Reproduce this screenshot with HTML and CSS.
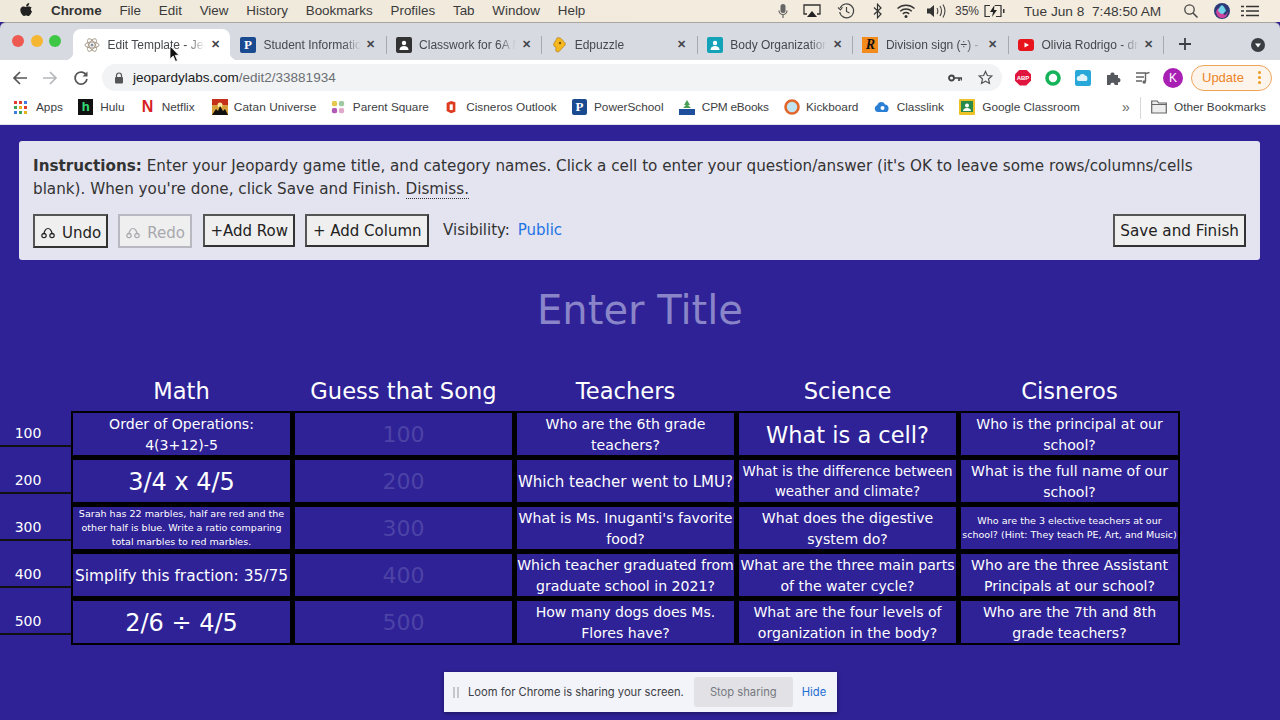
FILE: index.html
```html
<!DOCTYPE html>
<html lang="en">
<head>
<meta charset="utf-8">
<title>Edit Template - Jeopardy Labs</title>
<link rel="stylesheet" href="styles.css">
</head>
<body>
<header class="menubar">
  <svg class="apple" viewBox="0 0 14 16" width="14" height="16"><path fill="#222" d="M10.2 1c.1 1-.3 1.800-.8 2.400-.6.700-1.400 1.100-2.200 1-.1-.9.300-1.800.8-2.300C8.600 1.400 9.500 1 10.200 1zM12.800 5.600c-1.500.9-1.300 3 .2 3.800-.4 1.100-.9 2.100-1.600 3-.6.800-1.200 1.500-2.100 1.500-.9 0-1.200-.5-2.200-.5s-1.400.5-2.200.5c-.9 0-1.500-.8-2.100-1.600C1.500 10.500.8 7.900 1.800 6 2.400 5 3.400 4.400 4.500 4.400c.9 0 1.700.6 2.300.6.500 0 1.500-.7 2.600-.6 1.100.1 2.500.3 3.400 1.200z"/></svg>
  <nav class="menus">
    <span class="menu-strong">Chrome</span><span>File</span><span>Edit</span><span>View</span><span>History</span><span>Bookmarks</span><span>Profiles</span><span>Tab</span><span>Window</span><span>Help</span>
  </nav>
  <div class="status">
    <svg class="st st-mic" viewBox="0 0 12 16" width="12" height="16"><rect x="3.500" y="1" width="5" height="9" rx="2.500" fill="#666"/><path d="M2 7.500a4 4 0 0 0 8 0M6 12v3" stroke="#666" fill="none" stroke-width="1.200"/></svg>
    <svg class="st st-air" viewBox="0 0 18 16" width="18" height="16"><path d="M4 11H1V2h16v9h-3" fill="none" stroke="#333" stroke-width="1.300"/><path d="M9 8l5 6H4z" fill="#222"/></svg>
    <svg class="st st-clock" viewBox="0 0 18 18" width="18" height="18"><path d="M3.200 6a7 7 0 1 1-.5 4" fill="none" stroke="#444" stroke-width="1.200"/><path d="M1 5.500l2.500 2.500 2-2.800" fill="none" stroke="#444" stroke-width="1.100"/><path d="M9.500 5v4.500l3 1.500" fill="none" stroke="#444" stroke-width="1.200"/></svg>
    <svg class="st st-bt" viewBox="0 0 10 16" width="10" height="16"><path d="M1 4.500l7 6.500-3.500 3.800V1.200L8 5l-7 6.500" fill="none" stroke="#333" stroke-width="1.200"/></svg>
    <svg class="st st-wifi" viewBox="0 0 20 16" width="20" height="16"><path d="M1.500 5.500c5-4.400 12-4.400 17 0M4.200 8.200c3.400-2.900 8.200-2.900 11.600 0M6.800 10.800c2-1.500 4.400-1.500 6.400 0" fill="none" stroke="#333" stroke-width="1.500"/><circle cx="10" cy="13.500" r="1.500" fill="#333"/></svg>
    <svg class="st st-vol" viewBox="0 0 20 16" width="20" height="16"><path d="M1 5.500h3L8 2v12l-4-3.500H1z" fill="#333"/><path d="M11 5c1 1.800 1 4.200 0 6M14 3c1.800 3 1.800 7 0 10M17 1.500c2.400 4 2.400 9 0 13" fill="none" stroke="#444" stroke-width="1.100"/></svg>
    <span class="st-pct">35%</span>
    <svg class="st st-batt" viewBox="0 0 22 14" width="22" height="14"><path d="M7 1.500H2v11h5M12 1.500h6v11h-5" fill="none" stroke="#333" stroke-width="1.200"/><path d="M11.500 1L7 8h3l-1 5 5-7h-3z" fill="#222"/><rect x="20" y="5" width="1.500" height="4" fill="#333"/></svg>
    <span class="st-date">Tue Jun 8&nbsp; 7:48:50 AM</span>
    <svg class="st st-search" viewBox="0 0 16 16" width="16" height="16"><circle cx="6.500" cy="6.500" r="4.700" fill="none" stroke="#444" stroke-width="1.300"/><path d="M10 10l4.500 4.500" stroke="#444" stroke-width="1.500"/></svg>
    <svg class="st st-siri" viewBox="0 0 16 16" width="16" height="16"><circle cx="8" cy="8" r="8" fill="#2d3a78"/><path d="M2 9c2-5 3-5 6 0s4 3 6-1c-1 6-3 7-6 7S3 13 2 9z" fill="#d0439c"/><path d="M4 8c1-4 4-6 4-6s3 2 4 6c-2 1-2 3-4 3S6 9 4 8z" fill="#6fd3ea"/></svg>
    <svg class="st st-list" viewBox="0 0 18 12" width="18" height="12"><path d="M5 1.500h13M5 6h13M5 10.500h13M0 1.500h3M0 6h3M0 10.500h3" stroke="#333" stroke-width="1.500"/></svg>
  </div>
</header>

<div class="tabstrip">
  <div class="lights"><i class="light red"></i><i class="light amber"></i><i class="light green"></i></div>
  <div class="tab tab-active">
    <svg class="fav" viewBox="0 0 16 16" width="16" height="16"><g fill="none" stroke="#a59a88" stroke-width="1"><ellipse cx="8" cy="8" rx="7" ry="3"/><ellipse cx="8" cy="8" rx="7" ry="3" transform="rotate(60 8 8)"/><ellipse cx="8" cy="8" rx="7" ry="3" transform="rotate(120 8 8)"/></g><circle cx="8" cy="8" r="1.500" fill="#8a8fa0"/></svg>
    <span class="tab-title">Edit Template - Jeopardy</span><span class="tab-x">&#10005;</span>
  </div>
  <div class="tab">
    <span class="fav fav-p">P</span>
    <span class="tab-title">Student Information</span><span class="tab-x">&#10005;</span>
  </div>
  <div class="tab tab-sep">
    <svg class="fav" viewBox="0 0 16 16" width="16" height="16"><rect width="16" height="16" rx="2" fill="#333"/><circle cx="8" cy="6" r="2.200" fill="#fff"/><path d="M3.500 13c0-3 2-4 4.500-4s4.500 1 4.500 4z" fill="#fff"/></svg>
    <span class="tab-title">Classwork for 6A Math</span><span class="tab-x">&#10005;</span>
  </div>
  <div class="tab tab-sep">
    <svg class="fav" viewBox="0 0 16 16" width="16" height="16"><path d="M6 1c3-1 5 1 6 3 2 1 3 3 2 4-1 2-2 2-3 3-1 2-3 4-5 4-2-1-1-3-1-5-2 0-3-2-2-4 1-1 2-3 3-5z" fill="#f5b81f" stroke="#a8740f" stroke-width=".6"/><circle cx="9" cy="6" r="1.200" fill="#7b4f0a"/></svg>
    <span class="tab-title">Edpuzzle</span><span class="tab-x">&#10005;</span>
  </div>
  <div class="tab tab-sep">
    <svg class="fav" viewBox="0 0 16 16" width="16" height="16"><rect width="16" height="16" rx="2" fill="#14a2b8"/><circle cx="8" cy="6" r="2.200" fill="#fff"/><path d="M3.500 13c0-3 2-4 4.500-4s4.500 1 4.500 4z" fill="#fff"/></svg>
    <span class="tab-title">Body Organization</span><span class="tab-x">&#10005;</span>
  </div>
  <div class="tab tab-sep">
    <span class="fav fav-r">R</span>
    <span class="tab-title">Division sign (&divide;) - Wikipedia</span><span class="tab-x">&#10005;</span>
  </div>
  <div class="tab tab-sep tab-end">
    <svg class="fav" viewBox="0 0 16 16" width="16" height="16"><rect y="2" width="16" height="12" rx="3" fill="#e8141c"/><path d="M6.500 5.500L11 8l-4.500 2.500z" fill="#fff"/></svg>
    <span class="tab-title">Olivia Rodrigo - drivers</span><span class="tab-x">&#10005;</span>
  </div>
  <svg class="newtab" viewBox="0 0 12 12" width="12" height="12"><path d="M6 0v12M0 6h12" stroke="#3c3f44" stroke-width="1.800"/></svg>
  <svg class="tabsearch" viewBox="0 0 14 14" width="14" height="14"><circle cx="7" cy="7" r="7" fill="#3a3d42"/><path d="M4 5.500h6L7 9.500z" fill="#fff"/></svg>
</div>

<div class="toolbar">
  <svg class="nav nav-back" viewBox="0 0 16 16" width="16" height="16"><path d="M15 8H2M8 2L2 8l6 6" fill="none" stroke="#555" stroke-width="1.700"/></svg>
  <svg class="nav nav-fwd" viewBox="0 0 16 16" width="16" height="16"><path d="M1 8h13M8 2l6 6-6 6" fill="none" stroke="#b5b7bb" stroke-width="1.700"/></svg>
  <svg class="nav nav-reload" viewBox="0 0 16 16" width="16" height="16"><path d="M13.500 5.500A6 6 0 1 0 14 9" fill="none" stroke="#555" stroke-width="1.700"/><path d="M14.500 1.500v5h-5z" fill="#555"/></svg>
  <div class="omnibox">
    <svg class="lock" viewBox="0 0 10 12" width="10" height="12"><path d="M2.500 5V3.500a2.500 2.500 0 0 1 5 0V5" fill="none" stroke="#555" stroke-width="1.200"/><rect x="1" y="5" width="8" height="6.500" rx="1" fill="#555"/></svg>
    <span class="url"><b>jeopardylabs.com</b>/edit2/33881934</span>
    <svg class="omni-key" viewBox="0 0 14 10" width="14" height="10"><circle cx="3.500" cy="5" r="2.500" fill="none" stroke="#444" stroke-width="1.800"/><path d="M6 5h8M11 5v3M13.500 5v2.500" stroke="#444" stroke-width="1.700"/></svg>
    <svg class="omni-star" viewBox="0 0 16 16" width="15" height="15"><path d="M8 1.500l2 4.400 4.700.5-3.500 3.200 1 4.700L8 11.900l-4.200 2.400 1-4.700-3.500-3.200 4.700-.5z" fill="none" stroke="#555" stroke-width="1.300"/></svg>
  </div>
  <div class="exts">
    <span class="ext-abp">ABP</span>
    <svg viewBox="0 0 16 16" width="16" height="16"><circle cx="8" cy="8" r="6" fill="none" stroke="#16b35a" stroke-width="3.600"/></svg>
    <svg viewBox="0 0 16 16" width="16" height="16"><rect width="16" height="16" rx="2" fill="#28a8d8"/><path d="M4 11a2.500 2.500 0 0 1 .5-5c.5-2 4-3 5.500-.5 2-.5 3.500 3.500 1.500 5.500z" fill="#dff3fa"/></svg>
    <svg viewBox="0 0 16 16" width="16" height="16"><path d="M2 5h3.500c-.8-3.500 4.800-3.500 4 0H13v3.200c3.300-.8 3.300 4.800 0 4V15H9.500c.8-3-4.800-3-4 0H2z" fill="#55585c"/></svg>
    <svg viewBox="0 0 16 16" width="16" height="16"><path d="M1 3h10M1 7h8M1 11h6" stroke="#666" stroke-width="1.400"/><path d="M14.500 2.500L10.500 3.500v8" fill="none" stroke="#666" stroke-width="1.400"/><circle cx="9.200" cy="12" r="1.800" fill="#666"/></svg>
    <span class="ext-avatar">K</span>
    <span class="update">Update<i class="update-dots"></i></span>
  </div>
</div>

<div class="bookmarks">
  <span class="bm bm-apps"><svg viewBox="0 0 13 13" width="13" height="13"><g><rect width="3" height="3" fill="#e23b30"/><rect x="5" width="3" height="3" fill="#e23b30"/><rect x="10" width="3" height="3" fill="#3d7be5"/><rect y="5" width="3" height="3" fill="#3aa655"/><rect x="5" y="5" width="3" height="3" fill="#e8b020"/><rect x="10" y="5" width="3" height="3" fill="#e23b30"/><rect y="10" width="3" height="3" fill="#3d7be5"/><rect x="5" y="10" width="3" height="3" fill="#3aa655"/><rect x="10" y="10" width="3" height="3" fill="#e8b020"/></g></svg>Apps</span>
  <span class="bm"><span class="ico ico-hulu">h</span>Hulu</span>
  <span class="bm bm-netflix"><span class="ico ico-netflix">N</span>Netflix</span>
  <span class="bm bm-catan"><svg viewBox="0 0 16 16" width="16" height="16"><rect width="16" height="16" fill="#d8a03a"/><rect width="16" height="6" fill="#c5301c"/><circle cx="8" cy="6" r="2.500" fill="#fde9a0"/><path d="M0 16l4-6 2 2 2-5 3 5 2-2 3 6z" fill="#111"/></svg>Catan Universe</span>
  <span class="bm bm-narrow"><svg viewBox="0 0 16 16" width="14" height="14"><rect x="1" y="1" width="6" height="6" rx="2" fill="#e4c94c"/><rect x="9" y="1" width="6" height="6" rx="2" fill="#9fc9a0"/><rect x="1" y="9" width="6" height="6" rx="2" fill="#b15bb5"/><rect x="9" y="9" width="6" height="6" rx="2" fill="#e0a9c9"/></svg>Parent Square</span>
  <span class="bm bm-narrow"><svg viewBox="0 0 16 16" width="14" height="14"><path d="M8 1l5 1.500v11L8 15l-5-2.500v-9z" fill="#dc3b1e"/><rect x="6.500" y="5" width="3.500" height="6.500" fill="#fff"/></svg>Cisneros Outlook</span>
  <span class="bm"><span class="ico ico-p">P</span>PowerSchool</span>
  <span class="bm bm-cpm"><svg viewBox="0 0 16 16" width="16" height="16"><path d="M8 1L5 6h2L4 9h8L9 6h2z" fill="#4b9e55"/><rect x="0" y="10" width="16" height="6" fill="#1d4f9c"/></svg>CPM eBooks</span>
  <span class="bm bm-kick"><svg viewBox="0 0 16 16" width="16" height="16"><circle cx="8" cy="8" r="6.500" fill="#bfe3ef" stroke="#e2662a" stroke-width="2.600"/></svg>Kickboard</span>
  <span class="bm"><svg viewBox="0 0 16 16" width="16" height="16"><path d="M4 13a3.500 3.500 0 0 1-.8-6.800C4 2.500 9.500 1.500 11 5.500c3.500 0 5 5 2 7.500z" fill="#2a7fd5"/><circle cx="8.500" cy="9" r="2" fill="#fff"/></svg>Classlink</span>
  <span class="bm"><svg viewBox="0 0 16 16" width="16" height="16"><rect width="16" height="16" rx="1" fill="#edc128"/><rect x="2" y="2" width="12" height="11" fill="#2a8a4a"/><circle cx="8" cy="6.500" r="2" fill="#fff"/><path d="M4 12c0-2 2-3 4-3s4 1 4 3z" fill="#fff"/></svg>Google Classroom</span>
  <span class="bm-more">&raquo;</span>
  <span class="bm bm-other"><svg viewBox="0 0 16 14" width="16" height="14"><path d="M.7 1h5.500l1.500 2h7.600v10H.7z" fill="#eee" stroke="#666" stroke-width="1.200"/><path d="M.7 4.500h14.600" stroke="#666"/></svg>Other Bookmarks</span>
</div>

<main class="page">
  <section class="panel">
    <p class="instructions"><b>Instructions:</b> Enter your Jeopardy game title, and category names. Click a cell to enter your question/answer (it's OK to leave some rows/columns/cells blank). When you're done, click Save and Finish. <span class="dismiss">Dismiss.</span></p>
    <div class="actions">
      <button class="btn btn-icon"><svg viewBox="0 0 14 12" width="14" height="12"><path d="M3 7.500C3 4 5 1.500 7 1.500s4 2.500 4 6" fill="none" stroke="currentColor" stroke-width="1.200"/><circle cx="3" cy="8.500" r="2.200" fill="none" stroke="currentColor" stroke-width="1.200"/><circle cx="11" cy="8.500" r="2.200" fill="none" stroke="currentColor" stroke-width="1.200"/></svg>Undo</button>
      <button class="btn btn-icon btn-off"><svg viewBox="0 0 14 12" width="14" height="12"><path d="M3 7.500C3 4 5 1.500 7 1.500s4 2.500 4 6" fill="none" stroke="currentColor" stroke-width="1.200"/><circle cx="3" cy="8.500" r="2.200" fill="none" stroke="currentColor" stroke-width="1.200"/><circle cx="11" cy="8.500" r="2.200" fill="none" stroke="currentColor" stroke-width="1.200"/></svg>Redo</button>
      <button class="btn">+Add Row</button>
      <button class="btn">+ Add Column</button>
      <span class="visibility">Visibility: <span class="public">Public</span></span>
      <button class="btn btn-save">Save and Finish</button>
    </div>
  </section>

  <h1 class="title">Enter Title</h1>

  <div class="heads">
    <div>Math</div><div>Guess that Song</div><div>Teachers</div><div>Science</div><div>Cisneros</div>
  </div>
  <div class="board">
    <div class="labels">
      <div class="label">100</div><div class="label">200</div><div class="label">300</div><div class="label">400</div><div class="label">500</div>
    </div>
    <div class="grid">
      <div class="cell">Order of Operations:<br>4(3+12)-5</div>
      <div class="cell cell-ph">100</div>
      <div class="cell">Who are the 6th grade teachers?</div>
      <div class="cell cell-cell">What is a cell?</div>
      <div class="cell">Who is the principal at our school?</div>

      <div class="cell cell-lg">3/4 x 4/5</div>
      <div class="cell cell-ph">200</div>
      <div class="cell cell-md">Which teacher went to LMU?</div>
      <div class="cell cell-sm">What is the difference between weather and climate?</div>
      <div class="cell">What is the full name of our school?</div>

      <div class="cell cell-xs">Sarah has 22 marbles, half are red and the other half is blue. Write a ratio comparing total marbles to red marbles.</div>
      <div class="cell cell-ph">300</div>
      <div class="cell">What is Ms. Inuganti's favorite food?</div>
      <div class="cell">What does the digestive system do?</div>
      <div class="cell cell-xs">Who are the 3 elective teachers at our school? (Hint: They teach PE, Art, and Music)</div>

      <div class="cell cell-wide">Simplify this fraction: 35/75</div>
      <div class="cell cell-ph">400</div>
      <div class="cell">Which teacher graduated from graduate school in 2021?</div>
      <div class="cell">What are the three main parts of the water cycle?</div>
      <div class="cell">Who are the three Assistant Principals at our school?</div>

      <div class="cell cell-lg">2/6 &divide; 4/5</div>
      <div class="cell cell-ph">500</div>
      <div class="cell">How many dogs does Ms. Flores have?</div>
      <div class="cell">What are the four levels of organization in the body?</div>
      <div class="cell">Who are the 7th and 8th grade teachers?</div>
    </div>
  </div>
</main>

<div class="loom">
  <i class="loom-grip"></i>
  <span class="loom-text">Loom for Chrome is sharing your screen.</span>
  <span class="loom-stop">Stop sharing</span>
  <span class="loom-hide">Hide</span>
</div>

<svg class="cursor" viewBox="0 0 12 18" width="12" height="18"><path d="M1 1v13l3.200-3 2.300 5.500 2-1-2.300-5.200H10z" fill="#111" stroke="#fff" stroke-width=".8"/></svg>
</body>
</html>
```

FILE: styles.css
```css
* { box-sizing: border-box; }
html, body { margin: 0; padding: 0; }
body {
  width: 1280px;
  height: 720px;
  overflow: hidden;
  position: relative;
  display: flex;
  flex-direction: column;
  background: #2e2296;
  font-family: "Liberation Sans", Arial, sans-serif;
  color: #333;
}

/* macOS menu bar */
.menubar {
  height: 22px;
  flex: none;
  display: flex;
  align-items: center;
  padding: 0 0 1px 19px;
  background: linear-gradient(90deg, #efe9dc, #f4ecdf);
  font-size: 13.400px;
  color: #3a3a3a;
  position: relative;
}
.apple { flex: none; margin-right: 18px; margin-top: -2px; }
.menus { display: flex; gap: 17.800px; }
.menu-strong { font-weight: 700; color: #333; }
.status { position: absolute; left: 780px; top: 0; width: 500px; height: 22px; display: flex; align-items: center; }
.st { position: absolute; top: 50%; transform: translateY(-50%); }
.st-mic { left: -3px; }
.st-air { left: 23px; }
.st-clock { left: 57px; }
.st-bt { left: 93px; }
.st-wifi { left: 116px; }
.st-vol { left: 146px; }
.st-pct { position: absolute; left: 175px; font-size: 12px; }
.st-batt { left: 203px; }
.st-date { position: absolute; left: 244px; white-space: nowrap; font-size: 13.700px; }
.st-search { left: 403px; }
.st-siri { left: 434px; }
.st-list { left: 461px; }

/* Chrome tab strip */
.tabstrip {
  height: 38px;
  flex: none;
  display: flex;
  align-items: flex-end;
  background: #d7dae1;
  border-top: 1px solid #a8a69f;
  border-radius: 6px 6px 0 0;
  position: relative;
}
.lights { width: 73px; height: 36px; flex: none; display: flex; align-items: center; gap: 6.500px; padding: 0 0 3px 12px; }
.light { width: 12px; height: 12px; border-radius: 50%; display: block; }
.red { background: #ee5a52; }
.amber { background: #f5b731; }
.green { background: #3ec744; }
.tab {
  width: 155.600px;
  height: 31px;
  flex: none;
  display: flex;
  align-items: center;
  padding: 0 9px 0 10px;
  font-size: 12px;
  color: #46484d;
  position: relative;
}
.tab-active { width: 157px; background: #fff; border-radius: 8px 8px 0 0; padding-left: 11px; color: #45474b; }
.tab-active::before, .tab-active::after { content: ""; position: absolute; bottom: 0; width: 8px; height: 8px; }
.tab-active::before { left: -8px; background: radial-gradient(circle at 0 0, transparent 8px, #fff 8.500px); }
.tab-active::after { right: -8px; background: radial-gradient(circle at 100% 0, transparent 8px, #fff 8.500px); }
.tab-sep::before { content: ""; position: absolute; left: 0; top: 7px; height: 18px; width: 1px; background: #a6a9ae; }
.tab-end::after { content: ""; position: absolute; right: 0; top: 7px; height: 18px; width: 1px; background: #a6a9ae; }
.fav { flex: none; width: 16px; height: 16px; margin-right: 7.500px; }
.fav-p { background: #1a4a8f; color: #fff; font: 700 13px/16px "Liberation Serif", serif; text-align: center; border-radius: 2px; }
.fav-r { background: #f28a1c; color: #111; font: italic 700 14px/16px "Liberation Serif", serif; text-align: center; }
.tab-title {
  flex: 1;
  min-width: 0;
  white-space: nowrap;
  overflow: hidden;
  -webkit-mask-image: linear-gradient(90deg, #000 82%, transparent);
  mask-image: linear-gradient(90deg, #000 82%, transparent);
}
.tab-x { flex: none; width: 12px; margin-left: 4px; font-size: 11px; font-weight: 700; color: #44474c; text-align: center; }
.newtab { flex: none; margin: 0 0 10px 15px; }
.tabsearch { position: absolute; right: 15px; top: 15px; }

/* Toolbar */
.toolbar {
  height: 35px;
  flex: none;
  display: flex;
  align-items: center;
  background: #fff;
  padding-left: 12px;
}
.nav { flex: none; }
.nav-fwd { margin-left: 14px; }
.nav-reload { margin-left: 15px; }
.omnibox {
  width: 900px;
  height: 27px;
  flex: none;
  margin-left: 13px;
  display: flex;
  align-items: center;
  background: #f1f3f4;
  border-radius: 14px;
  padding: 0 9px 0 12px;
}
.lock { flex: none; }
.url { margin-left: 9px; font-size: 13.500px; color: #6b6e73; white-space: nowrap; }
.url b { font-weight: 400; color: #202124; }
.omni-key { margin-left: auto; margin-right: 16px; }
.exts { display: flex; align-items: center; gap: 14px; margin-left: 13px; }
.ext-abp { width: 16px; height: 16px; clip-path: polygon(30% 0, 70% 0, 100% 30%, 100% 70%, 70% 100%, 30% 100%, 0 70%, 0 30%); background: #e0163e; color: #fff; font-size: 6px; font-weight: 700; line-height: 16px; text-align: center; }
.ext-avatar { width: 20px; height: 20px; margin-left: -2px; border-radius: 50%; background: #a81fb4; color: #fff; font-size: 12px; line-height: 20px; text-align: center; }
.update {
  width: 81px;
  height: 26px;
  margin-left: -6px;
  border: 1px solid #eda55a;
  border-radius: 13px;
  background: #fdf5ec;
  color: #ec8428;
  font-size: 13px;
  line-height: 24px;
  padding-left: 10px;
  position: relative;
}
.update-dots { position: absolute; right: 10px; top: 5px; width: 3px; height: 3px; border-radius: 50%; background: #ee9a20; box-shadow: 0 5px 0 #ee9a20, 0 10px 0 #ee9a20; }

/* Bookmarks bar */
.bookmarks {
  height: 30px;
  flex: none;
  display: flex;
  align-items: center;
  gap: 15.300px;
  background: #fff;
  padding: 0 0 5px 14px;
  font-size: 11.800px;
  color: #3c4043;
  border-bottom: 1px solid #e3e5ea;
  position: relative;
}
.bm { display: flex; align-items: center; gap: 7px; white-space: nowrap; }
.bm-apps { gap: 9px; }
.bm-netflix { gap: 9px; margin-left: 2px; }
.bm-catan { gap: 6px; letter-spacing: .1px; margin: 0 -1px 0 2px; }
.bm-narrow { gap: 8px; }
.bm-cpm { letter-spacing: -.2px; }
.bm-kick { gap: 6px; }
.ico { width: 15px; height: 16px; display: block; text-align: center; }
.ico-hulu { background: #111; color: #35e07a; font: 700 13px/16px "Liberation Sans", sans-serif; }
.ico-netflix { color: #d81f26; font: 700 16px/16px "Liberation Sans", sans-serif; width: 11px; }
.ico-p { background: #1a4a8f; color: #fff; font: 700 13px/16px "Liberation Serif", serif; border-radius: 2px; }
.bm-more { position: absolute; left: 1122px; font-size: 14px; color: #666; }
.bm-other { position: absolute; left: 1151px; }
.bm-other::before { content: ""; position: absolute; left: -11px; top: -3px; height: 22px; width: 1px; background: #d5d7db; }

/* Page */
.page {
  flex: 1;
  min-height: 0;
  display: flex;
  flex-direction: column;
  background: #2e2296;
  font-family: "DejaVu Sans", Verdana, sans-serif;
  padding-top: 16px;
}
.panel {
  margin: 0 20px 0 19px;
  height: 119px;
  flex: none;
  background: #e4e4f0;
  border-radius: 3px;
  padding: 14px 14px 0;
  color: #333;
}
.instructions { margin: 0; padding-right: 40px; font-size: 15.200px; line-height: 23px; }
.dismiss { border-bottom: 1px dotted #333; }
.actions { display: flex; align-items: flex-start; margin-top: 13px; }
.btn {
  height: 33px;
  margin-right: 10px;
  padding: 0 5.500px;
  border: 2px solid #333;
  border-color: #555 #333 #333 #555;
  background: #efefef;
  font: 15px "DejaVu Sans", Verdana, sans-serif;
  color: #222;
  white-space: nowrap;
}
.btn-icon { height: 34px; display: flex; align-items: center; gap: 7px; padding: 3px 5px 0 6px; }
.btn-off { border-color: #b8b8c0; color: #a8a8ae; margin-right: 11px; }
.visibility { font-size: 15px; line-height: 33px; margin-left: 4px; color: #333; }
.public { color: #2273e4; margin-left: 3px; font-size: 15px; }
.btn-save { margin: 0 0 0 auto; padding: 0 5px; font-size: 15.200px; }

.title {
  margin: 25px 0 0;
  height: 89px;
  flex: none;
  text-align: center;
  font-size: 40px;
  line-height: 50px;
  font-weight: 400;
  color: #8a85c8;
}
.heads {
  display: grid;
  grid-template-columns: repeat(5, 217px);
  gap: 5px;
  padding: 2px 0 0 73px;
  height: 37px;
  flex: none;
  font-size: 22.600px;
  line-height: 30px;
  color: #fff;
  text-align: center;
}
.board { display: flex; flex: none; }
.labels {
  width: 71px;
  height: 233px;
  flex: none;
  display: flex;
  flex-direction: column;
}
.label {
  height: 47px;
  flex: none;
  width: 71px;
  border-bottom: 2px solid #111;
  font-size: 14px;
  line-height: 20px;
  color: #fff;
  padding: 23px 15px 0 0;
  text-align: center;
}
.label:first-child { height: 36px; padding-top: 12px; }
.grid {
  display: grid;
  grid-template-columns: repeat(5, 217px);
  grid-auto-rows: 42px;
  gap: 5px;
  padding: 2px;
  background: #000;
  flex: none;
}
.cell {
  background: #2e2296;
  color: #fff;
  display: flex;
  align-items: center;
  justify-content: center;
  text-align: center;
  font-size: 14.100px;
  line-height: 21px;
  padding-top: 1px;
  overflow: hidden;
}
.cell-lg { font-size: 24px; line-height: 30px; }
.cell-cell { font-size: 22.500px; line-height: 30px; }
.cell-md { font-size: 15px; padding-top: 2px; }
.cell-wide { font-size: 15.400px; padding-top: 2px; }
.cell-sm { font-size: 13.400px; line-height: 20px; }
.cell-xs { font-size: 9.550px; line-height: 14px; padding-top: 0; }
.cell-ph { font-size: 22px; color: #4d43a6; padding-top: 0; }

/* Loom bar */
.loom {
  position: absolute;
  left: 444px;
  top: 672px;
  width: 393px;
  height: 40px;
  display: flex;
  align-items: center;
  background: #f3f3fa;
  box-shadow: 0 1px 4px rgba(0,0,0,.4);
  font-family: Inter, "Liberation Sans", sans-serif;
  font-size: 11.200px;
}
.loom-grip { width: 6px; height: 11px; margin-left: 9px; border-left: 2px solid #c8c8cc; border-right: 2px solid #c8c8cc; }
.loom-text { margin-left: 9px; color: #3c3f44; white-space: nowrap; }
.loom-stop { margin-left: 10px; width: 99px; height: 30px; background: #e1e1e6; border-radius: 3px; text-align: center; line-height: 30px; color: #77797e; }
.loom-hide { margin-left: 9px; color: #1d6fd1; }

.cursor { position: absolute; left: 169px; top: 45px; }
```
